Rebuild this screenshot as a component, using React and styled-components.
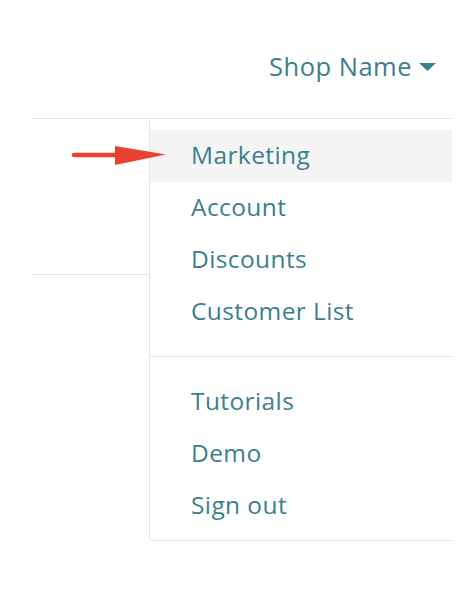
import React from "react";
import styled, { createGlobalStyle } from "styled-components";

const Global = createGlobalStyle`
  html, body { margin: 0; padding: 0; background: #fff; }
  body { font-family: "Open Sans", Lato, sans-serif; }
`;

const Page = styled.div`
  position: relative;
  width: 470px;
  height: 602px;
  background: #fff;
  overflow: hidden;
`;

const Header = styled.div`
  height: 118px;
  display: flex;
  align-items: center;
  justify-content: flex-end;
  padding-right: 34px;
  box-sizing: border-box;
`;

const ShopButton = styled.div`
  display: flex;
  align-items: center;
  gap: 7px;
  color: #3b7f8d;
  font-size: 25.5px;
  letter-spacing: 0.5px;
  line-height: 1;
  margin-top: 15px;
`;

const Main = styled.div`
  display: flex;
  margin-left: 32px;
  width: 420px;
  border-top: 1px solid #e6e6e6;
`;

const LeftBlock = styled.div`
  width: 117px;
  height: 155px;
  border-bottom: 1px solid #e6e6e6;
`;

const Panel = styled.div`
  flex: 1;
  border-left: 1px solid #e6e6e6;
  border-bottom: 1px solid #e6e6e6;
  border-bottom-left-radius: 4px;
  padding: 11px 0 8px;
`;

const Item = styled.div`
  height: 52px;
  display: flex;
  align-items: center;
  padding-left: 41px;
  padding-bottom: 3px;
  box-sizing: border-box;
  font-size: 24.5px;
  letter-spacing: 0.4px;
  color: #3b7f8d;
  background: ${(p) => (p.$active ? "#f5f5f5" : "transparent")};
`;

const Divider = styled.div`
  height: 1px;
  background: #e6e6e6;
  margin: 18px 0 19px;
`;

const Arrow = styled.svg`
  position: absolute;
  left: 70px;
  top: 142px;
`;

export default function App() {
  return (
    <Page>
      <Global />
      <Header>
        <ShopButton>
          Shop Name
          <svg width="17" height="8" viewBox="0 0 17 8">
            <path d="M0 0 H17 L8.5 8 Z" fill="#3b7f8d" />
          </svg>
        </ShopButton>
      </Header>
      <Main>
        <LeftBlock />
        <Panel>
          <Item $active>Marketing</Item>
          <Item>Account</Item>
          <Item>Discounts</Item>
          <Item>Customer List</Item>
          <Divider />
          <Item>Tutorials</Item>
          <Item>Demo</Item>
          <Item>Sign out</Item>
        </Panel>
      </Main>
      <Arrow width="98" height="26" viewBox="0 0 98 26">
        <path d="M4 13 L48 13" stroke="#e8412f" strokeWidth="4.5" strokeLinecap="round" />
        <path d="M45 4 L96 12.5 L45 23 Z" fill="#e8412f" />
      </Arrow>
    </Page>
  );
}
